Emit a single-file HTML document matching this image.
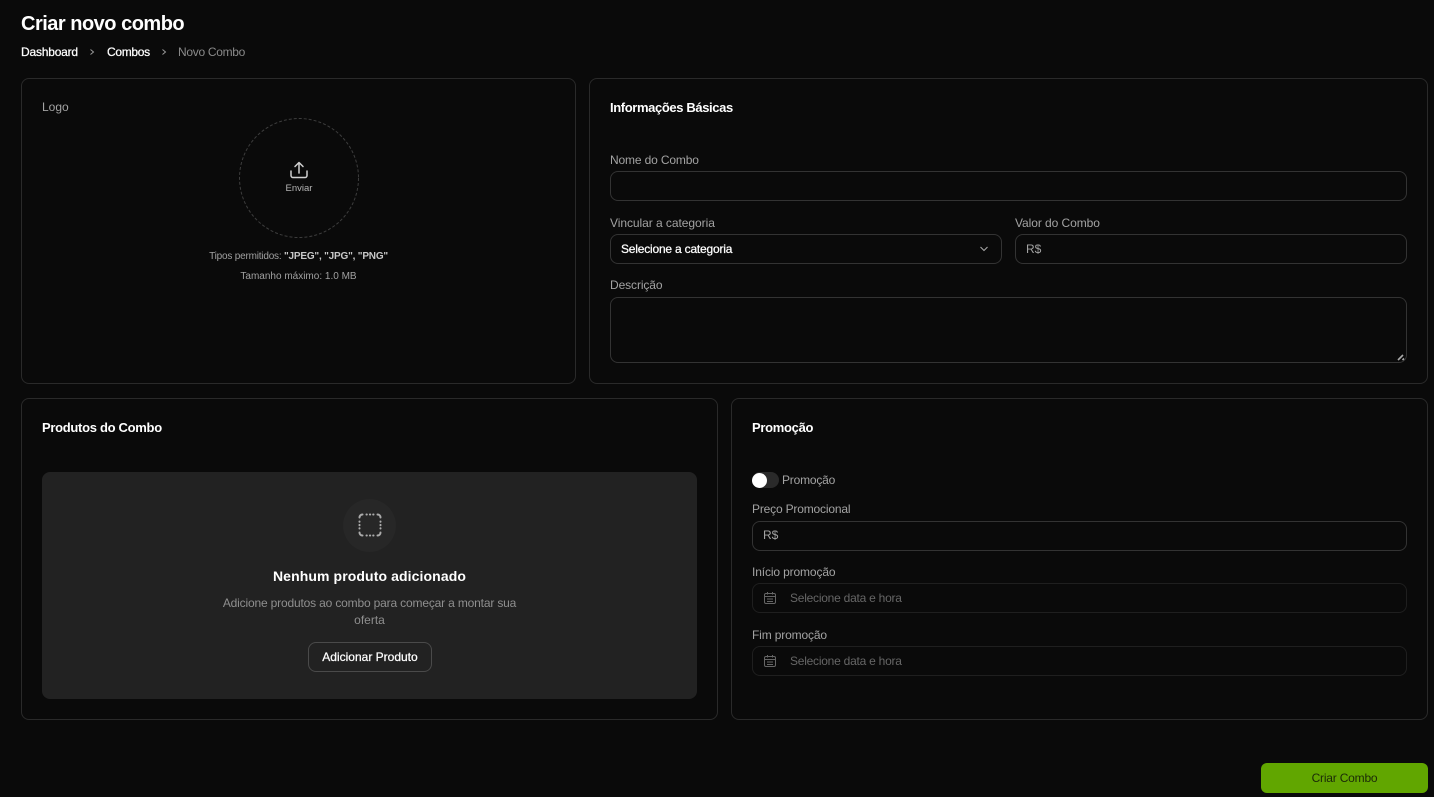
<!DOCTYPE html>
<html lang="pt-BR"><head><meta charset="utf-8"><title>Criar novo combo</title>
<style>
*{box-sizing:border-box}
html,body{margin:0;padding:0;width:1434px;height:797px;overflow:hidden;background:#0a0a0a;font-family:"Liberation Sans",sans-serif}
.t{position:absolute;white-space:nowrap;line-height:16px;font-size:12px;color:#a3a3a3}
.w{color:#fff}
.b{font-weight:700}
.m{-webkit-text-stroke:.25px currentColor}
.box{position:absolute;border:1px solid #2a2a2a;border-radius:8px}
.in{position:absolute;border:1px solid #333;border-radius:8px;height:30px}
svg{position:absolute}
</style></head><body>
<div class="t w b" style="left:21px;top:12px;font-size:20px;line-height:24px;letter-spacing:-.5px">Criar novo combo</div>
<div class="t w m" style="left:21px;top:44px;letter-spacing:-.2px">Dashboard</div>
<svg style="left:87px;top:47px" width="10" height="10" viewBox="0 0 10 10" fill="none" stroke="#999" stroke-width="1"><path d="M3.500 2.500 6.500 5 3.500 7.500"/></svg>
<div class="t w m" style="left:107px;top:44px;letter-spacing:-.3px">Combos</div>
<svg style="left:159px;top:47px" width="10" height="10" viewBox="0 0 10 10" fill="none" stroke="#999" stroke-width="1"><path d="M3.500 2.500 6.500 5 3.500 7.500"/></svg>
<div class="t" style="left:178px;top:44px;color:#8a8a8a;letter-spacing:-.3px">Novo Combo</div>

<div class="box" style="left:21px;top:78px;width:555px;height:306px"></div>
<div class="t" style="left:42px;top:99px;">Logo</div>
<svg style="left:239px;top:118px" width="120" height="120" fill="none"><circle cx="60" cy="60" r="59.500" stroke="#3d3d3d" stroke-dasharray="3 2"/></svg>
<svg style="left:289px;top:160px" width="20" height="20" viewBox="0 0 20 20" fill="none" stroke="#d0d0d0" stroke-width="1.500" stroke-linecap="round" stroke-linejoin="round"><path d="M2 11v4.500a2 2 0 0 0 2 2h12a2 2 0 0 0 2-2V11"/><path d="M10 13V2.500M6 6.500l4-4 4 4"/></svg>
<div class="t" style="left:239px;width:120px;text-align:center;top:181px;font-size:9.500px;color:#b5b5b5">Enviar</div>
<div class="t" style="left:21px;width:555px;text-align:center;top:249px;font-size:10px;color:#a0a0a0;letter-spacing:-.2px">Tipos permitidos: <b style="color:#c8c8c8">"JPEG", "JPG", "PNG"</b></div>
<div class="t" style="left:21px;width:555px;text-align:center;top:269px;font-size:10px;color:#a0a0a0">Tamanho máximo: 1.0 MB</div>

<div class="box" style="left:589px;top:78px;width:839px;height:306px"></div>
<div class="t w b" style="left:610px;top:100px;font-size:13px;letter-spacing:-.38px">Informações Básicas</div>
<div class="t" style="left:610px;top:152px;letter-spacing:-.15px">Nome do Combo</div>
<div class="in" style="left:610px;top:171px;width:797px"></div>
<div class="t" style="left:610px;top:215px;letter-spacing:-.05px">Vincular a categoria</div>
<div class="in" style="left:610px;top:234px;width:392px"></div>
<div class="t w m" style="left:621px;top:241px;font-size:12px;letter-spacing:-.2px">Selecione a categoria</div>
<svg style="left:979px;top:244px" width="10" height="10" viewBox="0 0 10 10" fill="none" stroke="#aaa" stroke-width="1"><path d="M1.500 3 5 6.500 8.500 3"/></svg>
<div class="t" style="left:1015px;top:215px;letter-spacing:-.07px">Valor do Combo</div>
<div class="in" style="left:1015px;top:234px;width:392px"></div>
<div class="t" style="left:1026px;top:241px;font-size:12px;">R$</div>
<div class="t" style="left:610px;top:277px;letter-spacing:-.1px">Descrição</div>
<div class="in" style="left:610px;top:297px;width:797px;height:66px"></div>
<svg style="left:1396px;top:352px" width="10" height="10" fill="none" stroke="#aaa" stroke-width="1.600"><path d="M2 8 7 3M6.500 8 8 6.500"/></svg>

<div class="box" style="left:21px;top:398px;width:697px;height:322px"></div>
<div class="t w b" style="left:42px;top:420px;font-size:13px;letter-spacing:-.3px">Produtos do Combo</div>
<div style="position:absolute;left:42px;top:472px;width:655px;height:227px;background:#222;border-radius:8px"></div>
<div style="position:absolute;left:343px;top:499px;width:53px;height:53px;border-radius:50%;background:#272727"></div>
<svg style="left:358px;top:513px" width="24" height="24" viewBox="0 0 24 24" fill="none" stroke="#ababab" stroke-width="2" stroke-linecap="round"><path d="M1.500 4.500A3 3 0 0 1 4.500 1.500M19.500 1.500A3 3 0 0 1 22.500 4.500M22.500 19.500A3 3 0 0 1 19.500 22.500M4.500 22.500A3 3 0 0 1 1.500 19.500M8.500 1.500h.3M11.900 1.500h.3M15.200 1.500h.3M8.500 22.500h.3M11.900 22.500h.3M15.200 22.500h.3M1.500 8.500v.3M1.500 11.900v.3M1.500 15.200v.3M22.500 8.500v.3M22.500 11.900v.3M22.500 15.200v.3"/></svg>
<div class="t w b" style="left:42px;width:655px;text-align:center;top:568px;font-size:14px;letter-spacing:.1px">Nenhum produto adicionado</div>
<div class="t" style="left:42px;width:655px;text-align:center;top:595px;color:#8f8f8f;letter-spacing:-.17px">Adicione produtos ao combo para começar a montar sua</div>
<div class="t" style="left:42px;width:655px;text-align:center;top:612px;color:#8f8f8f">oferta</div>
<div class="in" style="left:308px;top:642px;width:124px;border-color:#4a4a4a"></div>
<div class="t w m" style="left:308px;width:124px;text-align:center;top:649px;">Adicionar Produto</div>

<div class="box" style="left:731px;top:398px;width:697px;height:322px"></div>
<div class="t w b" style="left:752px;top:420px;font-size:13px;letter-spacing:-.3px">Promoção</div>
<div style="position:absolute;left:752px;top:472px;width:27px;height:16px;border-radius:8px;background:#2a2a2a"></div>
<div style="position:absolute;left:752px;top:472.500px;width:15px;height:15px;border-radius:50%;background:#fff"></div>
<div class="t" style="left:782px;top:472px;letter-spacing:-.2px">Promoção</div>
<div class="t" style="left:752px;top:501px;letter-spacing:-.18px">Preço Promocional</div>
<div class="in" style="left:752px;top:521px;width:655px"></div>
<div class="t" style="left:763px;top:527px;">R$</div>
<div class="t" style="left:752px;top:564px;letter-spacing:-.13px">Início promoção</div>
<div class="in" style="left:752px;top:583px;width:655px;border-color:#1f1f1f"></div>
<svg style="left:763px;top:591px" width="14" height="14" viewBox="0 0 14 14" fill="none" stroke="#666" stroke-width="1"><rect x="1.500" y="2.500" width="11" height="10" rx="1.500"/><path d="M1.500 5.500h11M4.500 1v2.500M9.500 1v2.500M4 8h6M4 10.500h6"/></svg>
<div class="t" style="left:790px;top:590px;color:#666;letter-spacing:-.24px">Selecione data e hora</div>
<div class="t" style="left:752px;top:627px;letter-spacing:-.15px">Fim promoção</div>
<div class="in" style="left:752px;top:646px;width:655px;border-color:#1f1f1f"></div>
<svg style="left:763px;top:654px" width="14" height="14" viewBox="0 0 14 14" fill="none" stroke="#666" stroke-width="1"><rect x="1.500" y="2.500" width="11" height="10" rx="1.500"/><path d="M1.500 5.500h11M4.500 1v2.500M9.500 1v2.500M4 8h6M4 10.500h6"/></svg>
<div class="t" style="left:790px;top:653px;color:#666;letter-spacing:-.24px">Selecione data e hora</div>

<div style="position:absolute;left:1261px;top:763px;width:167px;height:30px;border-radius:6px;background:#61a600"></div>
<div class="t" style="left:1261px;width:167px;text-align:center;top:770px;color:#1b2a08;letter-spacing:-.2px">Criar Combo</div>
</body></html>
